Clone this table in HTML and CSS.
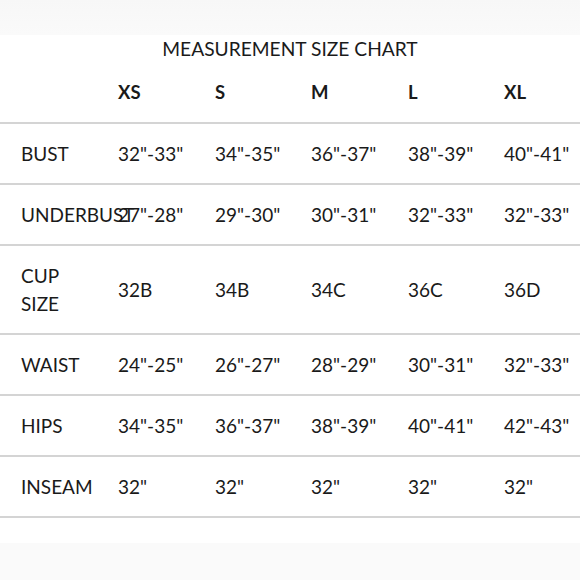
FILE: index.html
```html
<!DOCTYPE html>
<html>
<head>
<meta charset="utf-8">
<link rel="stylesheet" href="styles.css">
</head>
<body>
<div class="page">
  <div class="band-top"></div>
  <h1 class="title">MEASUREMENT SIZE CHART</h1>
  <div class="chart">
    <div class="row head">
      <div class="cell label"></div>
      <div class="cell">XS</div>
      <div class="cell">S</div>
      <div class="cell">M</div>
      <div class="cell">L</div>
      <div class="cell">XL</div>
    </div>
    <div class="row line">
      <div class="cell label">BUST</div>
      <div class="cell">32"-33"</div>
      <div class="cell">34"-35"</div>
      <div class="cell">36"-37"</div>
      <div class="cell">38"-39"</div>
      <div class="cell">40"-41"</div>
    </div>
    <div class="row line">
      <div class="cell label">UNDERBUST</div>
      <div class="cell">27"-28"</div>
      <div class="cell">29"-30"</div>
      <div class="cell">30"-31"</div>
      <div class="cell">32"-33"</div>
      <div class="cell">32"-33"</div>
    </div>
    <div class="row line">
      <div class="cell label">CUP SIZE</div>
      <div class="cell">32B</div>
      <div class="cell">34B</div>
      <div class="cell">34C</div>
      <div class="cell">36C</div>
      <div class="cell">36D</div>
    </div>
    <div class="row line">
      <div class="cell label">WAIST</div>
      <div class="cell">24"-25"</div>
      <div class="cell">26"-27"</div>
      <div class="cell">28"-29"</div>
      <div class="cell">30"-31"</div>
      <div class="cell">32"-33"</div>
    </div>
    <div class="row line">
      <div class="cell label">HIPS</div>
      <div class="cell">34"-35"</div>
      <div class="cell">36"-37"</div>
      <div class="cell">38"-39"</div>
      <div class="cell">40"-41"</div>
      <div class="cell">42"-43"</div>
    </div>
    <div class="row line last">
      <div class="cell label">INSEAM</div>
      <div class="cell">32"</div>
      <div class="cell">32"</div>
      <div class="cell">32"</div>
      <div class="cell">32"</div>
      <div class="cell">32"</div>
    </div>
  </div>
  <div class="spacer"></div>
  <div class="band-bottom"></div>
</div>
</body>
</html>
```
FILE: styles.css
```css
html, body {
  margin: 0;
  padding: 0;
  background: #ffffff;
}
.page {
  width: 580px;
  height: 580px;
  overflow: hidden;
  display: flex;
  flex-direction: column;
  font-family: Lato, "Open Sans", sans-serif;
  color: #1a1a1a;
}
.band-top {
  height: 35px;
  background: linear-gradient(180deg, #f7f7f7, #fafafa);
  flex: none;
}
.title {
  margin: 0;
  height: 28px;
  line-height: 28px;
  text-align: center;
  font-size: 19.2px;
  font-weight: 400;
}
.chart {
  display: flex;
  flex-direction: column;
}
.row {
  display: grid;
  grid-template-columns: 118px 97px 96px 97px 96px 1fr;
  align-items: center;
  font-size: 19px;
  line-height: 28px;
  padding: 15.5px 0;
}
.row.head {
  height: 57px;
  padding: 0 0 2px 0;
  font-weight: 700;
  font-size: 18.5px;
}
.row.line {
  border-top: 2px solid #d4d4d4;
}
.row.last {
  border-bottom: 2px solid #d4d4d4;
}
.cell {
  white-space: nowrap;
}
.cell.label {
  padding-left: 21px;
  white-space: normal;
  overflow: visible;
  max-width: 60px;
}
.spacer {
  height: 25px;
  flex: none;
}
.band-bottom {
  flex: 1;
  background: #fafafa;
}
```
